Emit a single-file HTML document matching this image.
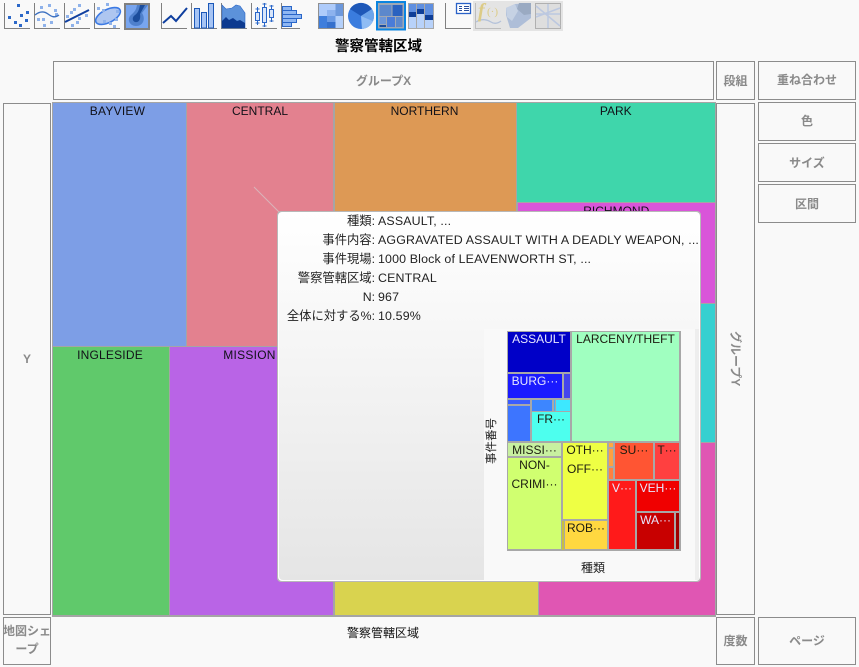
<!DOCTYPE html>
<html><head><meta charset="utf-8">
<style>
html,body{margin:0;padding:0;width:859px;height:667px;overflow:hidden;background:#f9f9f9;}
body{position:relative;font-family:"Liberation Sans","Noto Sans CJK JP",sans-serif;font-size:12px;color:#111;}
.a{position:absolute;box-sizing:border-box;}
.z{position:absolute;box-sizing:border-box;border:1px solid #8c8c8c;color:#8a8a8a;font-weight:bold;display:flex;align-items:center;justify-content:center;text-align:center;font-size:12px;line-height:22px;}
.c{position:absolute;box-sizing:border-box;text-align:center;font-size:12px;line-height:14px;padding-top:1px;overflow:hidden;color:#111118;}
.m{position:absolute;text-align:center;font-size:12px;line-height:19px;overflow:hidden;white-space:nowrap;color:#1c1c10;}
.m::before{content:"";display:block;margin-top:-2px;}
.w{color:#e6e6ff;}
.l{position:absolute;left:270px;width:105px;text-align:right;white-space:nowrap;line-height:19px;color:#222;font-size:12.3px;}
.v{position:absolute;left:378px;white-space:nowrap;line-height:19px;color:#222;font-size:12.4px;letter-spacing:.15px;}
</style></head><body>

<svg class="a" style="left:0;top:0" width="600" height="32" viewBox="0 0 600 32">
<g fill="none" stroke="#808080" stroke-width="1">
<path d="M4.500 3V28.500H30M34.500 3V28.500H60M64.500 3V28.500H90M94.500 3V28.500H120M161.500 3V28.500H187M191.500 3V28.500H217M221.500 3V28.500H247M251.500 3V28.500H277M281.500 3V28.500H300M445.500 3V28.500H471"/>
</g>
<!-- scatter -->
<g fill="#2c68c8"><rect x="17" y="4" width="3" height="3"/><rect x="8" y="16" width="3" height="3"/><rect x="20" y="14" width="3" height="3"/><rect x="26" y="11" width="3" height="3"/><rect x="14" y="21" width="3" height="3"/><rect x="25" y="19" width="3" height="3"/><rect x="19" y="24" width="3" height="3"/></g>
<!-- fit curve -->
<g fill="#8fb2ea"><rect x="40" y="6" width="3" height="3"/><rect x="48" y="4" width="3" height="3"/><rect x="54" y="9" width="3" height="3"/><rect x="55" y="13" width="3" height="3"/><rect x="37" y="18" width="3" height="3"/><rect x="42" y="18" width="3" height="3"/><rect x="50" y="21" width="3" height="3"/><rect x="43" y="24" width="3" height="3"/></g>
<path d="M35 15C40 11 44 11 48 14S55 18 59 15" fill="none" stroke="#3c70c0" stroke-width="1.400"/>
<!-- fit line -->
<g fill="#8fb2ea"><rect x="78" y="4" width="3" height="3"/><rect x="73" y="8" width="3" height="3"/><rect x="70" y="11" width="3" height="3"/><rect x="66" y="15" width="3" height="3"/><rect x="85" y="14" width="3" height="3"/><rect x="78" y="17" width="3" height="3"/><rect x="76" y="21" width="3" height="3"/><rect x="71" y="24" width="3" height="3"/></g>
<path d="M65 22L89 10" stroke="#0f3f9f" stroke-width="2"/>
<!-- ellipse -->
<ellipse cx="108" cy="16" rx="13.500" ry="6.500" transform="rotate(-27 108 16)" fill="#aec6f0" stroke="#3c7ae4" stroke-width="1.600"/>
<g fill="#8fb2ea"><rect x="97" y="7" width="3" height="3"/><rect x="106" y="3" width="3" height="3"/><rect x="102" y="9" width="3" height="3"/><rect x="116" y="10" width="3" height="3"/><rect x="103" y="20" width="3" height="3"/><rect x="109" y="22" width="3" height="3"/><rect x="113" y="25" width="3" height="3"/><rect x="115" y="18" width="3" height="3"/></g>
<!-- density -->
<rect x="125" y="4" width="24" height="25" fill="#78a5ef" stroke="#808080" stroke-width="2"/>
<path d="M137 5H148L142 13C146 19 143 26 136 26C130 26 127 20 130 16C134 12 136 11 137 5Z" fill="#4f80cc"/>
<path d="M140 5H145L140 14C141 19 139 23 135 22C132 21 132 17 135 15C138 13 139 10 140 5Z" fill="#1c4d9c"/>
<!-- line -->
<path d="M163 23L171 16L176 21L187 8" fill="none" stroke="#0f3f9f" stroke-width="2"/>
<!-- bars -->
<g fill="#a6c4f4" stroke="#1c58b8" stroke-width="1"><rect x="194.500" y="8.500" width="5" height="19.500"/><rect x="201.500" y="12.500" width="5" height="15.500"/><rect x="208.500" y="3.500" width="5" height="24.500"/></g>
<!-- area -->
<path d="M222 5L226 9L232 8L236 5L240 6L245 13V28H222Z" fill="#5c92da" stroke="#2a66c8" stroke-width=".6"/>
<path d="M222 21L226 17L229 20L233 18L237 21L240 20L245 23V28H222Z" fill="#0c3a90"/>
<!-- box -->
<g fill="#d9e6fa" stroke="#2a66c8" stroke-width="1"><path d="M257.500 7V25M264.500 3V27M271.500 5V22" fill="none"/><path d="M255.500 9h4M255.500 23h4M262.500 4h4M262.500 26h4M269.500 6h4M269.500 21h4" fill="none"/><rect x="255.500" y="12.500" width="4" height="8"/><rect x="262.500" y="7.500" width="4" height="15"/><rect x="269.500" y="9.500" width="4" height="8"/></g>
<!-- hist -->
<g fill="#8fb7f2" stroke="#2a66c8" stroke-width="1"><rect x="282.500" y="6.500" width="9" height="4"/><rect x="282.500" y="10.500" width="14" height="4"/><rect x="282.500" y="14.500" width="19" height="4"/><rect x="282.500" y="18.500" width="14" height="4"/><rect x="282.500" y="22.500" width="9" height="4"/></g>
<!-- checker treemap -->
<rect x="318" y="3" width="26" height="26" fill="#909090"/>
<rect x="319" y="4" width="8" height="12" fill="#aecbfa"/><rect x="319" y="16" width="8" height="12" fill="#3f7edc"/>
<rect x="327" y="4" width="8.500" height="6" fill="#aecbfa"/><rect x="327" y="10" width="8.500" height="6" fill="#8db2ee"/><rect x="327" y="16" width="8.500" height="6" fill="#6a9ae4"/><rect x="327" y="22" width="8.500" height="6" fill="#3570cc"/>
<rect x="335.500" y="4" width="7.500" height="12" fill="#6c98dc"/><rect x="335.500" y="16" width="7.500" height="12" fill="#b4d0fa"/>
<!-- pie -->
<circle cx="361" cy="16" r="13" fill="#3a7cde"/>
<path d="M361 16L350 9A13 13 0 0 1 372 9Z" fill="#1e58b8"/>
<path d="M361 16L372 9A13 13 0 0 1 373 21Z" fill="#6ca4ea"/>
<path d="M361 16L373 21A13 13 0 0 1 362 29Z" fill="#8fbcf4"/>
<!-- selected treemap -->
<rect x="377" y="2" width="28" height="27.500" fill="#a0a8b4" stroke="#0a84e0" stroke-width="2"/>
<rect x="379.500" y="5" width="12" height="11" fill="#5c88cc"/><rect x="392.500" y="5" width="10" height="11" fill="#2a62c0"/>
<rect x="379.500" y="17" width="6.500" height="7" fill="#6c96d8"/><rect x="379.500" y="25" width="6.500" height="2" fill="#1c4c9c"/><rect x="387" y="17" width="8" height="10" fill="#4a7cd8"/><rect x="396" y="17" width="6.500" height="10" fill="#5c88cc"/>
<!-- stacked -->
<rect x="408" y="3" width="26" height="26" fill="#a8a8a8"/>
<rect x="409" y="4" width="7" height="8" fill="#5f8fe0"/><rect x="409" y="12" width="7" height="5" fill="#0e3e98"/><rect x="409" y="17" width="7" height="11" fill="#b8d2fa"/>
<rect x="417" y="4" width="7" height="5" fill="#5f8fe0"/><rect x="417" y="9" width="7" height="5" fill="#0e3e98"/><rect x="417" y="14" width="7" height="14" fill="#b8d2fa"/>
<rect x="425" y="4" width="8" height="11" fill="#5f8fe0"/><rect x="425" y="15" width="8" height="5" fill="#0e3e98"/><rect x="425" y="20" width="8" height="8" fill="#b8d2fa"/>
<!-- legend -->
<rect x="456.500" y="3.500" width="14" height="10" fill="#fff" stroke="#2a62c8" stroke-width="1.300"/>
<path d="M459 6.500h3M459 8.500h3M459 10.500h3M464 6.500h5M464 8.500h5M464 10.500h5" stroke="#2a4e9c" stroke-width="1"/>
<!-- disabled -->
<rect x="473" y="1" width="90" height="30" fill="#e4e4e4"/>
<path d="M475.500 3V28.500H501" fill="none" stroke="#bdbdbd"/>
<path d="M476 22C482 18 488 20 491 22S497 24 501 21" fill="none" stroke="#b4c2da" stroke-width="1.300"/>
<text x="478" y="17" font-family="Liberation Serif,serif" font-size="20" font-style="italic" font-weight="bold" fill="#dccb86">f</text>
<text x="487" y="15" font-family="Liberation Serif,serif" font-size="11" fill="#dccb86">(·)</text>
<path d="M506 8L515 4L531 3V18L518 28H510L506 15Z" fill="#aebed8"/>
<path d="M519 3H531V14L524 15L517 9Z" fill="#9aaac2"/>
<path d="M506 8L515 4L518 11L512 21L507 17Z" fill="#c6d2e4"/>
<rect x="535.500" y="3.500" width="25" height="25" fill="#dedede" stroke="#b0b0b0"/>
<path d="M536 6L560 26M536 17L560 8M536 14L560 14M548 4V28" fill="none" stroke="#bcc8e0" stroke-width="1.500"/>
</svg>

<div class="a" style="left:335px;top:38px;font-size:14.500px;font-weight:bold;line-height:18px;color:#000;white-space:nowrap;">警察管轄区域</div>

<div class="z" style="left:53px;top:61px;width:661px;height:39px;">グループX</div>
<div class="z" style="left:716px;top:61px;width:39px;height:39px;">段組</div>
<div class="z" style="left:758px;top:61px;width:98px;height:39px;padding-bottom:2px;">重ね合わせ</div>
<div class="z" style="left:758px;top:102px;width:98px;height:39px;padding-bottom:2px;">色</div>
<div class="z" style="left:758px;top:143px;width:98px;height:39px;">サイズ</div>
<div class="z" style="left:758px;top:184px;width:98px;height:39px;">区間</div>
<div class="z" style="left:3px;top:103px;width:48px;height:512px;">Y</div>
<div class="z" style="left:716px;top:103px;width:39px;height:512px;"><span style="writing-mode:vertical-rl;text-orientation:sideways;">グループY</span></div>
<div class="z" style="left:3px;top:617px;width:48px;height:48px;line-height:18px;white-space:nowrap;padding-bottom:2px;">地図シェ<br>ープ</div>
<div class="z" style="left:716px;top:617px;width:39px;height:48px;">度数</div>
<div class="z" style="left:758px;top:617px;width:98px;height:48px;">ページ</div>
<div class="a" style="left:347px;top:625px;font-size:12px;line-height:16px;color:#111;white-space:nowrap;">警察管轄区域</div>

<!-- main treemap -->
<div class="a" style="left:52px;top:102px;width:664px;height:515px;background:#a5a5a5;"></div>
<div class="c" style="left:53px;top:103px;width:133px;height:243px;background:#7d9ee6;padding-right:4px;letter-spacing:.25px;">BAYVIEW</div>
<div class="c" style="left:187px;top:103px;width:146px;height:243px;background:#e3818f;">CENTRAL</div>
<div class="c" style="left:335px;top:103px;width:181px;height:260px;background:#dd9955;padding-right:2px;">NORTHERN</div>
<div class="c" style="left:517px;top:103px;width:197.500px;height:99px;background:#3fd6ab;">PARK</div>
<div class="c" style="left:518px;top:203px;width:196.500px;height:100px;background:#d955d9;">RICHMOND</div>
<div class="a" style="left:518px;top:304px;width:196.500px;height:138px;background:#35d0d0;"></div>
<div class="a" style="left:539px;top:443px;width:175.500px;height:172px;background:#e056b3;"></div>
<div class="c" style="left:53px;top:347px;width:116px;height:268px;background:#60c96b;line-height:16px;padding-top:0;padding-right:2px;letter-spacing:.2px;">INGLESIDE</div>
<div class="c" style="left:170px;top:347px;width:163px;height:268px;background:#b964e6;line-height:16px;padding-top:0;padding-right:4px;letter-spacing:.25px;">MISSION</div>
<div class="a" style="left:335px;top:450px;width:203px;height:165px;background:#d9d34f;"></div>
<svg class="a" style="left:250px;top:183px" width="32" height="32"><path d="M4 4L29 29" stroke="#d9b4ba" stroke-width="1"/></svg>

<!-- tooltip -->
<div class="a" style="left:277px;top:211px;width:424px;height:371px;background:#b8b8b8;border-radius:4px;"></div>
<div class="a" style="left:278px;top:212px;width:422px;height:369px;background:#fff;border-radius:4px;"></div>
<div class="a" style="left:279px;top:212px;width:420px;height:368px;background:linear-gradient(#fff 0%,#e5e5e5 100%);border-radius:4px;"></div>
<div class="a" style="left:484px;top:329px;width:211px;height:251px;background:#f9f9f9;"></div>
<div class="a" style="left:695px;top:329px;width:4px;height:251px;background:#eeeeee;"></div>

<div class="l" style="top:212px;">種類:</div><div class="v" style="top:212px;">ASSAULT, ...</div>
<div class="l" style="top:231px;">事件内容:</div><div class="v" style="top:231px;">AGGRAVATED ASSAULT WITH A DEADLY WEAPON, ...</div>
<div class="l" style="top:250px;">事件現場:</div><div class="v" style="top:250px;">1000 Block of LEAVENWORTH ST, ...</div>
<div class="l" style="top:269px;">警察管轄区域:</div><div class="v" style="top:269px;">CENTRAL</div>
<div class="l" style="top:288px;">N:</div><div class="v" style="top:288px;">967</div>
<div class="l" style="top:307px;">全体に対する%:</div><div class="v" style="top:307px;">10.59%</div>

<div class="a" style="left:484px;top:418px;width:16px;height:46px;font-size:11.500px;line-height:16px;writing-mode:vertical-rl;text-orientation:sideways;transform:rotate(180deg);text-align:center;color:#222;white-space:nowrap;">事件番号</div>
<div class="a" style="left:581px;top:560px;font-size:12px;line-height:16px;color:#222;">種類</div>

<!-- inner treemap -->
<div class="a" style="left:507px;top:331px;width:174px;height:220px;background:#a8a8a8;"></div>
<div class="m w" style="left:508px;top:332px;width:62px;height:40px;background:#0000c8;padding-right:0;">ASSAULT</div>
<div class="m" style="left:572px;top:332px;width:107px;height:109px;background:#a0ffc0;">LARCENY/THEFT</div>
<div class="m w" style="left:508px;top:374px;width:54px;height:24px;background:#1a1aff;">BURG···</div>
<div class="a" style="left:564px;top:374px;width:6px;height:24px;background:#4444ee;"></div>
<div class="a" style="left:508px;top:400px;width:22px;height:4px;background:#3a5cff;"></div>
<div class="a" style="left:532px;top:400px;width:20px;height:11px;background:#3d86ff;"></div>
<div class="a" style="left:554px;top:400px;width:1px;height:11px;background:#3db0ff;"></div>
<div class="a" style="left:556px;top:400px;width:14px;height:11px;background:#3de8ff;"></div>
<div class="a" style="left:508px;top:406px;width:22px;height:35px;background:#3d75ff;"></div>
<div class="m" style="left:532px;top:412px;width:38px;height:29px;background:#4dffee;">FR···</div>
<div class="m" style="left:508px;top:443px;width:53px;height:13px;background:#c8f0a0;line-height:18px;">MISSI···</div>
<div class="m" style="left:508px;top:458px;width:53px;height:91px;background:#d0ff70;white-space:normal;">NON-<br>CRIMI···</div>
<div class="m" style="left:563px;top:443px;width:44px;height:76px;background:#eeff44;">OTH···<br>OFF···</div>
<div class="a" style="left:562px;top:521px;width:2px;height:29px;background:#c8c040;"></div>
<div class="m" style="left:565px;top:521px;width:42px;height:28px;background:#ffd840;">ROB···</div>
<div class="a" style="left:609px;top:443px;width:4px;height:4px;background:#ffaa40;"></div>
<div class="a" style="left:609px;top:449px;width:4px;height:17px;background:#ffa040;"></div>
<div class="a" style="left:609px;top:468px;width:4px;height:11px;background:#ff8040;"></div>
<div class="m" style="left:615px;top:443px;width:38px;height:36px;background:#ff5533;">SU···</div>
<div class="m" style="left:655px;top:443px;width:24px;height:36px;background:#ff4040;">T···</div>
<div class="m w" style="left:609px;top:481px;width:26px;height:68px;background:#ff1a1a;">V···</div>
<div class="m w" style="left:637px;top:481px;width:42px;height:30px;background:#f00000;">VEH···</div>
<div class="m w" style="left:637px;top:513px;width:37px;height:36px;background:#c80000;">WA···</div>
<div class="a" style="left:676px;top:513px;width:3px;height:36px;background:#a00000;"></div>
</body></html>
